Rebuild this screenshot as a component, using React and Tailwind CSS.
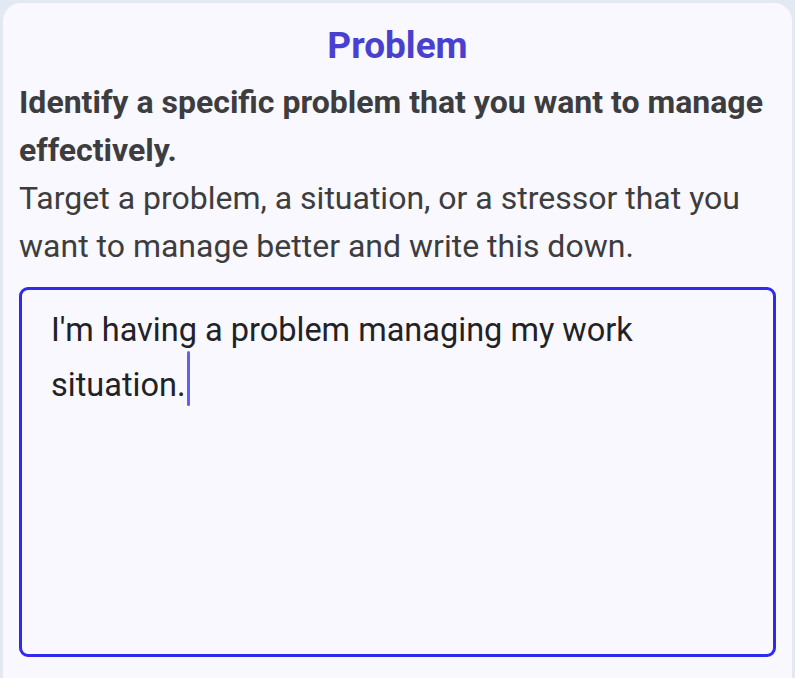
import React from 'react';

const App = () => {
  return (
    <div className="min-h-screen bg-[#e3e9f3] pt-[3px] px-[3px] font-['Roboto',sans-serif]">
      <div className="bg-[#f8f8fe] rounded-t-[18px] px-[16px] pt-[21px] pb-[20px] min-h-[700px]">
        <h1 className="text-center text-[37px] leading-[44px] font-bold text-[#4a40cf]">Problem</h1>
        <p className="mt-[10px] text-[32px] leading-[48px] font-bold text-[#3d3d40]">
          Identify a specific problem that you want to manage effectively.
        </p>
        <p className="text-[32px] leading-[48px] text-[#3d3d40]">
          Target a problem, a situation, or a stressor that you want to manage better and write this down.
        </p>

        {/* Answer box */}
        <div className="mt-[17px] h-[370px] rounded-[9px] border-[3px] border-[#3129ee] bg-[#f8f8fe] pl-[29px] pr-[40px] pt-[13px] text-[32.5px] leading-[55px] text-[#222226]">
          I'm having a problem managing my work situation.
          <span className="inline-block w-[3px] h-[55px] -mt-[7px] ml-[1px] align-[-10px] rounded-full bg-[#6060f2]" />
        </div>
      </div>
    </div>
  );
};

export default App;
